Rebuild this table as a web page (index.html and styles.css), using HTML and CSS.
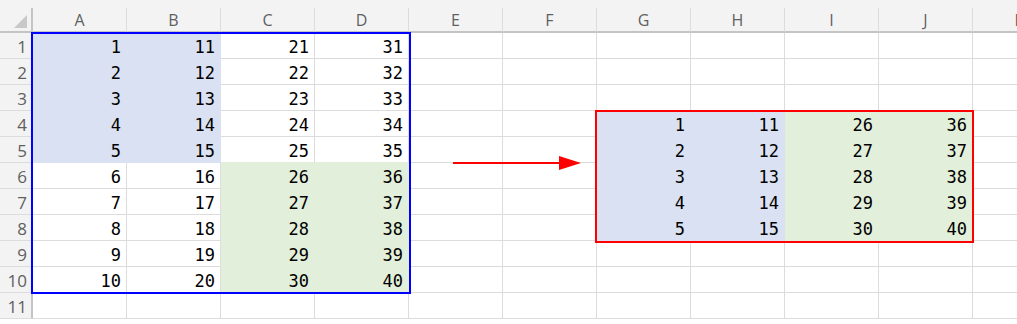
FILE: index.html
```html
<!DOCTYPE html>
<html>
<head>
<meta charset="utf-8">
<link rel="stylesheet" href="styles.css">
</head>
<body>
<div class="wrap">
  <div class="strip"></div>
  <div class="sheet">
    <div class="corner"><span class="tri"></span></div>
    <div class="ch">A</div><div class="ch">B</div><div class="ch">C</div><div class="ch">D</div><div class="ch">E</div><div class="ch">F</div><div class="ch">G</div><div class="ch">H</div><div class="ch">I</div><div class="ch">J</div><div class="ch">K</div>

    <div class="rh">1</div><div class="c b">1</div><div class="c b">11</div><div class="c">21</div><div class="c">31</div><div class="c"></div><div class="c"></div><div class="c"></div><div class="c"></div><div class="c"></div><div class="c"></div><div class="c"></div>
    <div class="rh">2</div><div class="c b">2</div><div class="c b">12</div><div class="c">22</div><div class="c">32</div><div class="c"></div><div class="c"></div><div class="c"></div><div class="c"></div><div class="c"></div><div class="c"></div><div class="c"></div>
    <div class="rh">3</div><div class="c b">3</div><div class="c b">13</div><div class="c">23</div><div class="c">33</div><div class="c"></div><div class="c"></div><div class="c"></div><div class="c"></div><div class="c"></div><div class="c"></div><div class="c"></div>
    <div class="rh">4</div><div class="c b">4</div><div class="c b">14</div><div class="c">24</div><div class="c">34</div><div class="c"></div><div class="c"></div><div class="c b">1</div><div class="c b">11</div><div class="c g">26</div><div class="c g">36</div><div class="c"></div>
    <div class="rh">5</div><div class="c b">5</div><div class="c b">15</div><div class="c nb">25</div><div class="c nb">35</div><div class="c"></div><div class="c"></div><div class="c b">2</div><div class="c b">12</div><div class="c g">27</div><div class="c g">37</div><div class="c"></div>
    <div class="rh">6</div><div class="c">6</div><div class="c">16</div><div class="c g">26</div><div class="c g">36</div><div class="c"></div><div class="c"></div><div class="c b">3</div><div class="c b">13</div><div class="c g">28</div><div class="c g">38</div><div class="c"></div>
    <div class="rh">7</div><div class="c">7</div><div class="c">17</div><div class="c g">27</div><div class="c g">37</div><div class="c"></div><div class="c"></div><div class="c b">4</div><div class="c b">14</div><div class="c g">29</div><div class="c g">39</div><div class="c"></div>
    <div class="rh">8</div><div class="c">8</div><div class="c">18</div><div class="c g">28</div><div class="c g">38</div><div class="c"></div><div class="c"></div><div class="c b">5</div><div class="c b">15</div><div class="c g">30</div><div class="c g">40</div><div class="c"></div>
    <div class="rh">9</div><div class="c">9</div><div class="c">19</div><div class="c g">29</div><div class="c g">39</div><div class="c"></div><div class="c"></div><div class="c"></div><div class="c"></div><div class="c"></div><div class="c"></div><div class="c"></div>
    <div class="rh">10</div><div class="c">10</div><div class="c">20</div><div class="c g">30</div><div class="c g">40</div><div class="c"></div><div class="c"></div><div class="c"></div><div class="c"></div><div class="c"></div><div class="c"></div><div class="c"></div>
    <div class="rh">11</div><div class="c"></div><div class="c"></div><div class="c"></div><div class="c"></div><div class="c"></div><div class="c"></div><div class="c"></div><div class="c"></div><div class="c"></div><div class="c"></div><div class="c"></div>
  </div>

  <div class="sel-blue"></div>
  <div class="sel-red"></div>
  <svg class="arrow" width="130" height="16" viewBox="0 0 130 16">
    <line x1="0" y1="8" x2="108" y2="8" stroke="#ff0000" stroke-width="2"/>
    <polygon points="106,1 128,8 106,15" fill="#ff0000"/>
  </svg>
</div>
</body>
</html>
```

FILE: styles.css
```css
html, body {
  margin: 0;
  padding: 0;
  background: #ffffff;
}

.wrap {
  position: relative;
  width: 1017px;
  height: 324px;
  overflow: hidden;
}

.strip {
  height: 8px;
  background: #f3f3f3;
}

.sheet {
  display: grid;
  grid-template-columns: 33px repeat(11, 94px);
  grid-template-rows: 25px repeat(11, 26px);
  width: max-content;
}

.corner {
  position: relative;
  background: #f3f3f3;
  border-right: 2px solid #c4c4c4;
  border-bottom: 2px solid #c4c4c4;
}

.tri {
  position: absolute;
  right: 4px;
  bottom: 3px;
  width: 0;
  height: 0;
  border-left: 13px solid transparent;
  border-bottom: 13px solid #c8c8c8;
}

.ch {
  background: #f3f3f3;
  border-right: 1px solid #dcdcdc;
  border-bottom: 2px solid #c4c4c4;
  font-family: "Open Sans", "Noto Sans", sans-serif;
  font-size: 16px;
  color: #5f5f5f;
  display: flex;
  align-items: center;
  justify-content: center;
}

.rh {
  background: #f3f3f3;
  border-right: 2px solid #c4c4c4;
  border-bottom: 1px solid #dcdcdc;
  font-family: "Open Sans", "Noto Sans", sans-serif;
  font-size: 17px;
  color: #5f5f5f;
  display: flex;
  align-items: center;
  justify-content: flex-end;
  padding-right: 4px;
  padding-top: 1px;
}

.c {
  border-right: 1px solid #dcdcdc;
  border-bottom: 1px solid #dcdcdc;
  font-family: "DejaVu Sans Mono", monospace;
  font-size: 17px;
  color: #000000;
  display: flex;
  align-items: center;
  justify-content: flex-end;
  padding-right: 5px;
  padding-top: 2px;
}

.c.b {
  background: #d9e1f2;
  border-color: #d9e1f2;
}

.c.g {
  background: #e2efda;
  border-color: #e2efda;
}

.c.nb {
  border-bottom-color: #e2efda;
}

.sel-blue {
  position: absolute;
  left: 31px;
  top: 32px;
  width: 376px;
  height: 258px;
  border: 2px solid #0000ff;
}

.sel-red {
  position: absolute;
  left: 595px;
  top: 110px;
  width: 375px;
  height: 129px;
  border: 2px solid #ff0000;
}

.arrow {
  position: absolute;
  left: 453px;
  top: 155px;
}
```
